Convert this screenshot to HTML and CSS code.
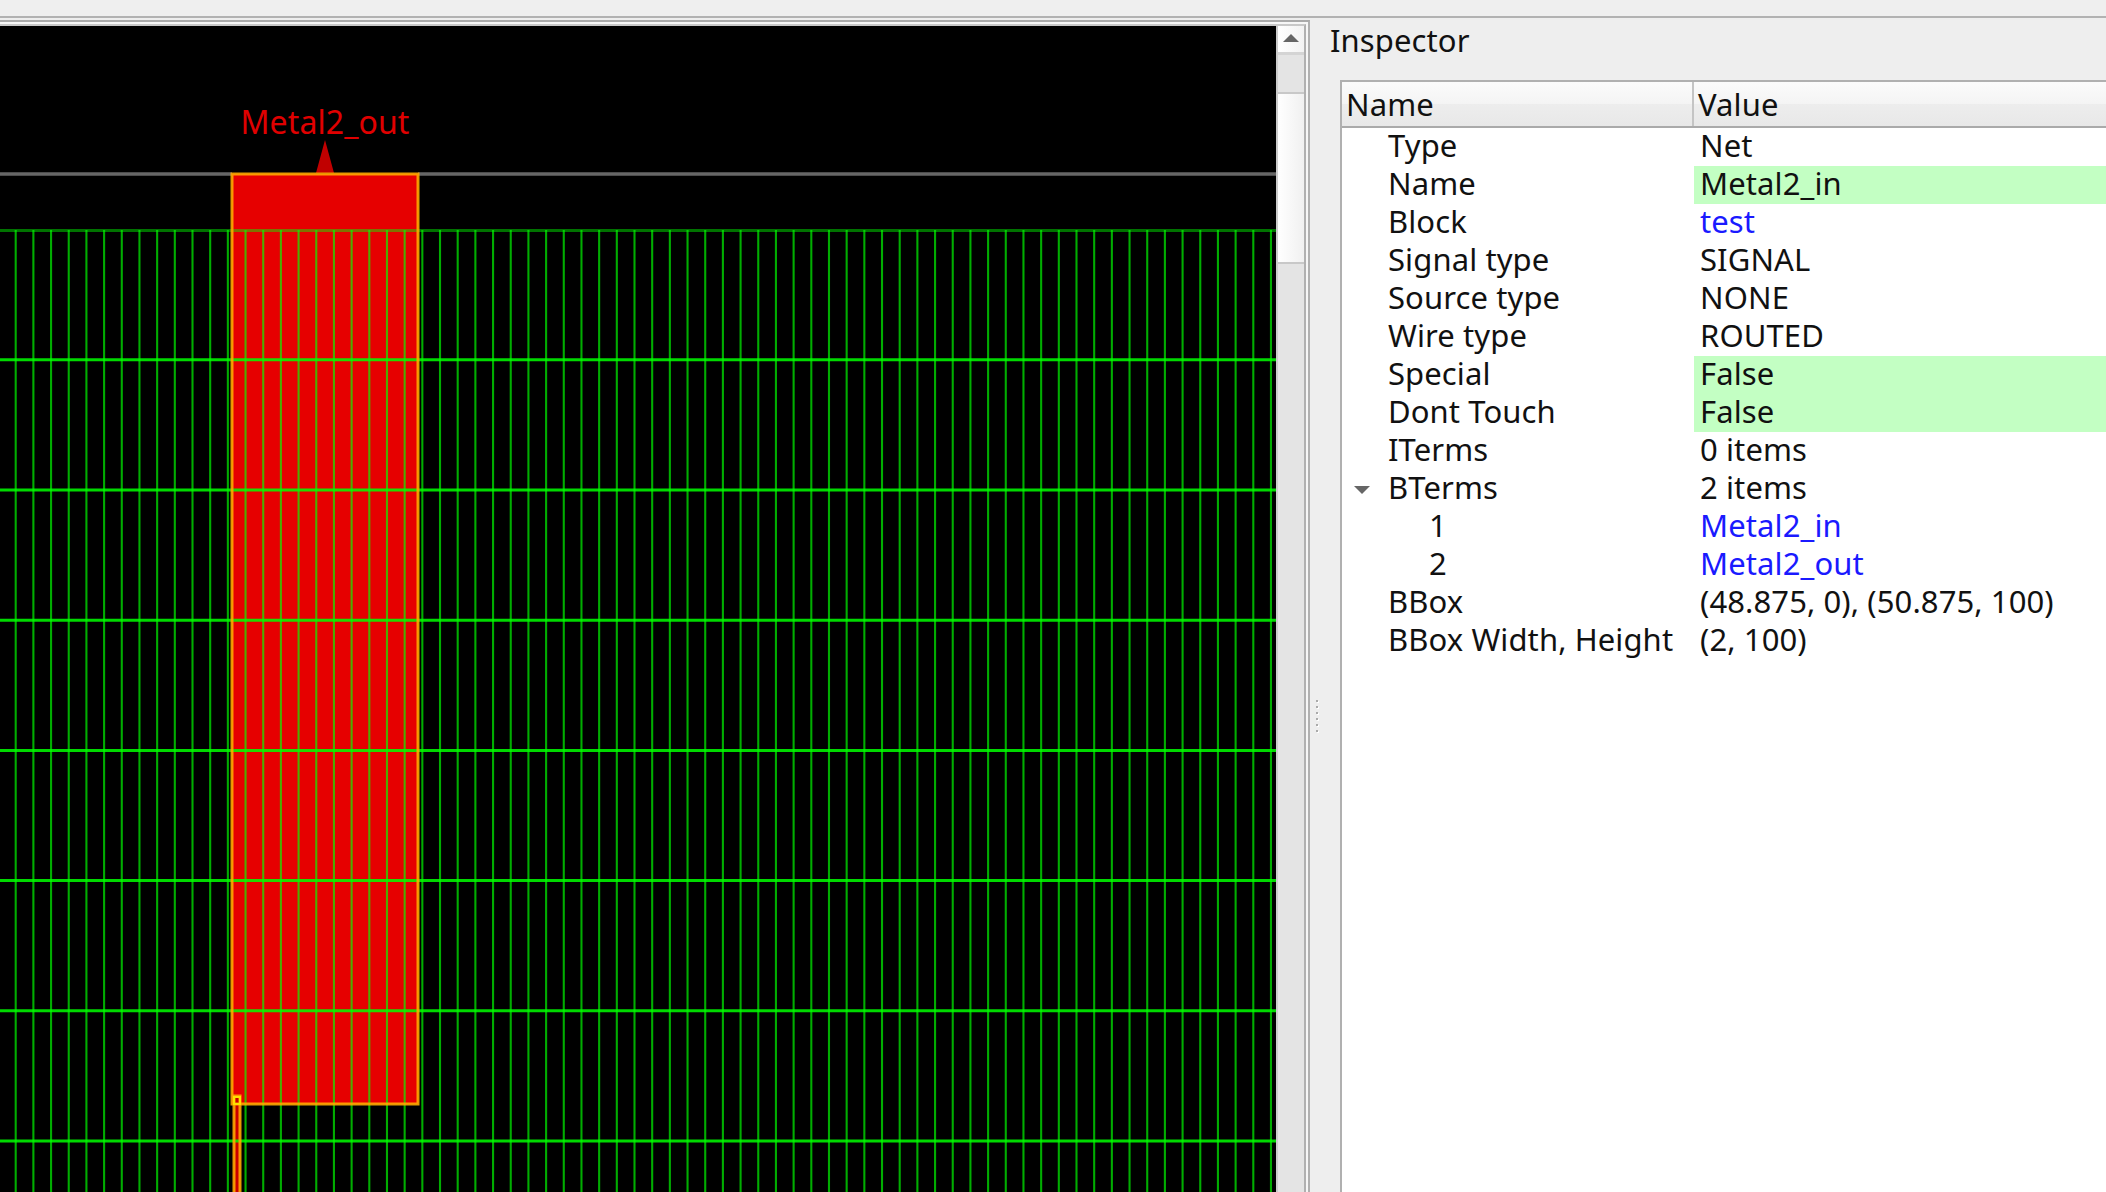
FILE: index.html
```html
<!DOCTYPE html>
<html lang="en">
<head>
	<meta charset="UTF-8">
	<title>Inspector</title>
	<link rel="stylesheet" href="styles.css">
</head>
<body>
	<div class="menubar"></div>
	<div class="main">
		<div class="frame">
		<div class="viewer">
			<svg class="layout" width="1276" height="1166" viewBox="0 26 1276 1166">
				<rect class="metal" x="232" y="174" width="186" height="930"/>
				<polygon class="pin" points="325,140 316,173 334,173"/>
				<rect class="wire" x="234" y="1097" width="6" height="100"/>
				<line class="die" x1="0" y1="174" x2="232" y2="174"/>
				<line class="die" x1="418" y1="174" x2="1276" y2="174"/>
				<g class="tracks-v" transform="translate(-.3 0)">
					<line x1="16" y1="230" x2="16" y2="1192"/>
					<line x1="33.68" y1="230" x2="33.68" y2="1192"/>
					<line x1="51.36" y1="230" x2="51.36" y2="1192"/>
					<line x1="69.04" y1="230" x2="69.04" y2="1192"/>
					<line x1="86.72" y1="230" x2="86.72" y2="1192"/>
					<line x1="104.4" y1="230" x2="104.4" y2="1192"/>
					<line x1="122.08" y1="230" x2="122.08" y2="1192"/>
					<line x1="139.76" y1="230" x2="139.76" y2="1192"/>
					<line x1="157.44" y1="230" x2="157.44" y2="1192"/>
					<line x1="175.12" y1="230" x2="175.12" y2="1192"/>
					<line x1="192.8" y1="230" x2="192.8" y2="1192"/>
					<line x1="210.48" y1="230" x2="210.48" y2="1192"/>
					<line x1="228.16" y1="230" x2="228.16" y2="1192"/>
					<line x1="245.84" y1="230" x2="245.84" y2="1192"/>
					<line x1="263.52" y1="230" x2="263.52" y2="1192"/>
					<line x1="281.2" y1="230" x2="281.2" y2="1192"/>
					<line x1="298.88" y1="230" x2="298.88" y2="1192"/>
					<line x1="316.56" y1="230" x2="316.56" y2="1192"/>
					<line x1="334.24" y1="230" x2="334.24" y2="1192"/>
					<line x1="351.92" y1="230" x2="351.92" y2="1192"/>
					<line x1="369.6" y1="230" x2="369.6" y2="1192"/>
					<line x1="387.28" y1="230" x2="387.28" y2="1192"/>
					<line x1="404.96" y1="230" x2="404.96" y2="1192"/>
					<line x1="422.64" y1="230" x2="422.64" y2="1192"/>
					<line x1="440.32" y1="230" x2="440.32" y2="1192"/>
					<line x1="458" y1="230" x2="458" y2="1192"/>
					<line x1="475.68" y1="230" x2="475.68" y2="1192"/>
					<line x1="493.36" y1="230" x2="493.36" y2="1192"/>
					<line x1="511.04" y1="230" x2="511.04" y2="1192"/>
					<line x1="528.72" y1="230" x2="528.72" y2="1192"/>
					<line x1="546.4" y1="230" x2="546.4" y2="1192"/>
					<line x1="564.08" y1="230" x2="564.08" y2="1192"/>
					<line x1="581.76" y1="230" x2="581.76" y2="1192"/>
					<line x1="599.44" y1="230" x2="599.44" y2="1192"/>
					<line x1="617.12" y1="230" x2="617.12" y2="1192"/>
					<line x1="634.8" y1="230" x2="634.8" y2="1192"/>
					<line x1="652.48" y1="230" x2="652.48" y2="1192"/>
					<line x1="670.16" y1="230" x2="670.16" y2="1192"/>
					<line x1="687.84" y1="230" x2="687.84" y2="1192"/>
					<line x1="705.52" y1="230" x2="705.52" y2="1192"/>
					<line x1="723.2" y1="230" x2="723.2" y2="1192"/>
					<line x1="740.88" y1="230" x2="740.88" y2="1192"/>
					<line x1="758.56" y1="230" x2="758.56" y2="1192"/>
					<line x1="776.24" y1="230" x2="776.24" y2="1192"/>
					<line x1="793.92" y1="230" x2="793.92" y2="1192"/>
					<line x1="811.6" y1="230" x2="811.6" y2="1192"/>
					<line x1="829.28" y1="230" x2="829.28" y2="1192"/>
					<line x1="846.96" y1="230" x2="846.96" y2="1192"/>
					<line x1="864.64" y1="230" x2="864.64" y2="1192"/>
					<line x1="882.32" y1="230" x2="882.32" y2="1192"/>
					<line x1="900" y1="230" x2="900" y2="1192"/>
					<line x1="917.68" y1="230" x2="917.68" y2="1192"/>
					<line x1="935.36" y1="230" x2="935.36" y2="1192"/>
					<line x1="953.04" y1="230" x2="953.04" y2="1192"/>
					<line x1="970.72" y1="230" x2="970.72" y2="1192"/>
					<line x1="988.4" y1="230" x2="988.4" y2="1192"/>
					<line x1="1006.08" y1="230" x2="1006.08" y2="1192"/>
					<line x1="1023.76" y1="230" x2="1023.76" y2="1192"/>
					<line x1="1041.44" y1="230" x2="1041.44" y2="1192"/>
					<line x1="1059.12" y1="230" x2="1059.12" y2="1192"/>
					<line x1="1076.8" y1="230" x2="1076.8" y2="1192"/>
					<line x1="1094.48" y1="230" x2="1094.48" y2="1192"/>
					<line x1="1112.16" y1="230" x2="1112.16" y2="1192"/>
					<line x1="1129.84" y1="230" x2="1129.84" y2="1192"/>
					<line x1="1147.52" y1="230" x2="1147.52" y2="1192"/>
					<line x1="1165.2" y1="230" x2="1165.2" y2="1192"/>
					<line x1="1182.88" y1="230" x2="1182.88" y2="1192"/>
					<line x1="1200.56" y1="230" x2="1200.56" y2="1192"/>
					<line x1="1218.24" y1="230" x2="1218.24" y2="1192"/>
					<line x1="1235.92" y1="230" x2="1235.92" y2="1192"/>
					<line x1="1253.6" y1="230" x2="1253.6" y2="1192"/>
					<line x1="1271.28" y1="230" x2="1271.28" y2="1192"/>
				</g>
				<g class="tracks-h">
					<line class="edge" x1="0" y1="230.5" x2="1276" y2="230.5"/>
					<line x1="0" y1="359.7" x2="1276" y2="359.7"/>
					<line x1="0" y1="490" x2="1276" y2="490"/>
					<line x1="0" y1="620.2" x2="1276" y2="620.2"/>
					<line x1="0" y1="750.4" x2="1276" y2="750.4"/>
					<line x1="0" y1="880.6" x2="1276" y2="880.6"/>
					<line x1="0" y1="1010.8" x2="1276" y2="1010.8"/>
					<line x1="0" y1="1141" x2="1276" y2="1141"/>
				</g>
				<rect class="outline" x="232" y="174" width="186" height="930"/>
				<rect class="outline" x="234" y="1096" width="6" height="100"/>
				<rect class="corner" x="234" y="1097" width="6" height="7"/>
				<text class="pin-label" x="325" y="134">Metal2_out</text>
			</svg>
			<div class="scrollbar">
				<div class="scroll-btn"><span class="arrow-up"></span></div>
				<div class="scroll-track short"></div>
				<div class="scroll-thumb"></div>
				<div class="scroll-track"></div>
			</div>
		</div>
		</div>
		<div class="inspector">
			<div class="grip">
				<span></span><span></span><span></span><span></span><span></span><span></span>
			</div>
			<div class="dock-title">Inspector</div>
			<div class="tree">
				<div class="tree-head">
					<div class="name-col">Name</div>
					<div class="value-col">Value</div>
				</div>
				<div class="row"><div class="name">Type</div><div class="value">Net</div></div>
				<div class="row"><div class="name">Name</div><div class="value edit">Metal2_in</div></div>
				<div class="row"><div class="name">Block</div><div class="value link">test</div></div>
				<div class="row"><div class="name">Signal type</div><div class="value">SIGNAL</div></div>
				<div class="row"><div class="name">Source type</div><div class="value">NONE</div></div>
				<div class="row"><div class="name">Wire type</div><div class="value">ROUTED</div></div>
				<div class="row"><div class="name">Special</div><div class="value edit">False</div></div>
				<div class="row"><div class="name">Dont Touch</div><div class="value edit">False</div></div>
				<div class="row"><div class="name">ITerms</div><div class="value">0 items</div></div>
				<div class="row"><div class="name"><span class="arrow-down"></span>BTerms</div><div class="value">2 items</div></div>
				<div class="row"><div class="name child">1</div><div class="value link">Metal2_in</div></div>
				<div class="row"><div class="name child">2</div><div class="value link">Metal2_out</div></div>
				<div class="row"><div class="name">BBox</div><div class="value">(48.875, 0), (50.875, 100)</div></div>
				<div class="row"><div class="name">BBox Width, Height</div><div class="value">(2, 100)</div></div>
			</div>
		</div>
	</div>
</body>
</html>
```

FILE: styles.css
```css
html,body{margin: 0;height: 100%;overflow: hidden;}
body{display: flex;flex-direction: column;background: #eee;font-family: "Noto Sans","Open Sans",sans-serif;font-size: 31px;letter-spacing: .1px;color: #111;}

.menubar{height: 16px;background: #efefef;border-bottom: 2px solid #b2b2b2;flex: none;}
.main{flex: 1;display: flex;min-height: 0;}

.frame{flex: none;margin-top: 2px;padding: 2px 2px 0 0;background: #f6f6f6;border-top: 2px solid #aaa;border-right: 2px solid #b0b0b0;display: flex;}
.viewer{width: 1304px;display: flex;border-top: 2px solid #c8c8c8;border-right: 2px solid #b0b0b0;}
.layout{display: block;background: #000;flex: none;}
.metal{fill: #e60000;}
.pin{fill: #c00000;}
.wire{fill: #c80000;}
.die{stroke: #666;stroke-width: 3.5;}
.tracks-v line{stroke: #00ff00;stroke-opacity: .68;stroke-width: 2.1;}
.tracks-h line{stroke: #00ff00;stroke-opacity: .85;stroke-width: 3;}
.tracks-h .edge{stroke-opacity: .45;stroke-width: 3;}
.outline{fill: none;stroke: #ffa800;stroke-opacity: .9;stroke-width: 3;}
.corner{fill: none;stroke: #ffe000;stroke-width: 2;}
.pin-label{fill: #e00000;font-size: 32px;text-anchor: middle;}

.scrollbar{width: 28px;flex: none;display: flex;flex-direction: column;background: #e4e4e4;border-left: 2px solid #ccc;box-sizing: border-box;}
.scroll-btn{height: 26px;flex: none;background: linear-gradient(to right,#fff,#f2f2f2);border-bottom: 3px solid #d4d4d4;display: flex;align-items: center;justify-content: center;}
.arrow-up{width: 0;height: 0;margin-bottom: 2px;border-left: 8px solid transparent;border-right: 8px solid transparent;border-bottom: 8px solid #666;}
.scroll-track{flex: 1;background: #e4e4e4;}
.scroll-track.short{flex: none;height: 37px;}
.scroll-thumb{height: 168px;flex: none;background: linear-gradient(to right,#fff,#f0f0f0);border-top: 2px solid #c8c8c8;border-bottom: 2px solid #c8c8c8;}

.inspector{flex: 1;min-width: 0;margin-top: 2px;position: relative;display: flex;flex-direction: column;background: #eee;}
.grip{position: absolute;left: 6px;top: 680px;display: flex;flex-direction: column;gap: 4px;}
.grip span{display: block;width: 2px;height: 2px;background: #aaa;box-shadow: 1px 1px 0 #fff;}
.dock-title{height: 60px;padding-left: 20px;line-height: 40px;flex: none;}
.tree{flex: 1;margin-left: 30px;background: #fff;border-left: 2px solid #b0b0b0;border-top: 2px solid #b0b0b0;}
.tree-head{display: flex;height: 44px;line-height: 44px;background: linear-gradient(#fbfbfb,#f4f4f4 50%,#ededed 50%,#e8e8e8);border-bottom: 2px solid #aaa;}
.name-col{width: 352px;padding-left: 4px;box-sizing: border-box;border-right: 2px solid #c4c4c4;}
.value-col{padding-left: 4px;}
.row{display: flex;height: 38px;line-height: 35px;}
.name{width: 352px;box-sizing: border-box;padding-left: 46px;position: relative;white-space: nowrap;}
.name.child{padding-left: 87px;}
.value{flex: 1;padding-left: 6px;white-space: nowrap;}
.value.edit{background: #c3ffc3;}
.value.link{color: #1a1aff;}
.arrow-down{position: absolute;left: 12px;top: 16px;width: 0;height: 0;border-left: 8px solid transparent;border-right: 8px solid transparent;border-top: 8px solid #666;}
```
